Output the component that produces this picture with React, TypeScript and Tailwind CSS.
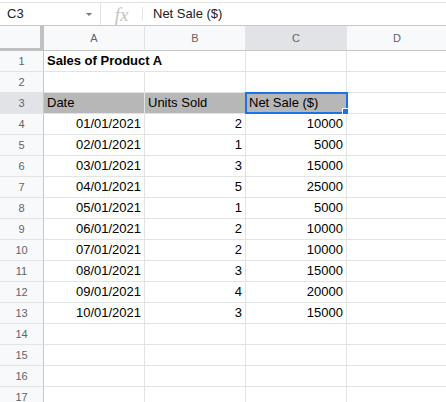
const font = "font-['Liberation_Sans',Arial,sans-serif]";

const rows: { a?: string; b?: string; c?: string; kind?: "title" | "head" }[] = [
  { a: "Sales of Product A", kind: "title" },
  {},
  { a: "Date", b: "Units Sold", c: "Net Sale ($)", kind: "head" },
];

const units = [2, 1, 3, 5, 1, 2, 2, 3, 4, 3];
units.forEach((u, i) => {
  rows.push({
    a: `${String(i + 1).padStart(2, "0")}/01/2021`,
    b: String(u),
    c: String(u * 5000),
  });
});
while (rows.length < 17) rows.push({});

function FormulaBar() {
  return (
    <div className="h-[26px] pt-[2px] bg-white">
      <div className="flex h-[24px] border-t border-b border-t-[#e3e3e3] border-b-[#c7c7c7] text-[13px] text-[#202124]">
        <div className="w-[101px] flex items-center justify-between pl-[7px] pr-[8px] border-r border-[#e3e3e3]">
          <span>C3</span>
          <span className="w-0 h-0 border-l-[3px] border-r-[3px] border-t-[3px] border-l-transparent border-r-transparent border-t-[#777]" />
        </div>
        <div className="w-[41px] flex items-center justify-center">
          <span className="font-['Liberation_Serif',serif] italic text-[19px] text-[#c4c4c4] leading-none">fx</span>
        </div>
        <div className="my-[4px] border-l border-[#e3e3e3]" />
        <div className="flex items-center pl-[10px]">Net Sale ($)</div>
      </div>
    </div>
  );
}

function App() {
  const cols = ["A", "B", "C", "D"];
  return (
    <div className={`${font} w-[446px] h-[402px] overflow-hidden bg-white`}>
      <FormulaBar />
      <div className="grid grid-cols-[44px_101px_101px_101px_101px] grid-rows-[25px] auto-rows-[21px]">
        {/* header row */}
        <div className="bg-[#f8f9fa] border-r-4 border-b-[3px] border-[#c0c0c0]" />
        {cols.map((c) => (
          <div
            key={c}
            className={`flex items-center justify-center text-[11px] text-[#5f6368] border-r border-r-[#e2e3e3] border-b border-b-[#c4c7c5] ${
              c === "C" ? "bg-[#e1e3e6]" : "bg-[#f8f9fa]"
            }`}
          >
            {c}
          </div>
        ))}

        {rows.map((r, i) => {
          const n = i + 1;
          const head = r.kind === "head";
          const title = r.kind === "title";
          const cell = `flex items-center px-[3px] text-[13px] text-black border-r border-b border-[#e2e3e3] whitespace-nowrap ${
            head ? "bg-[#b7b7b7]" : "bg-white"
          }`;
          return (
            <div key={n} className="contents">
              <div
                className={`flex items-center justify-center text-[11px] text-[#5f6368] border-r border-r-[#c4c7c5] border-b border-b-[#e2e3e3] ${
                  head ? "bg-[#e1e3e6]" : "bg-[#f8f9fa]"
                }`}
              >
                {n}
              </div>
              <div
                className={`${cell} ${head || title ? "" : "justify-end"} ${
                  title ? "relative z-10 font-bold border-r-white" : ""
                }`}
              >
                {r.a}
              </div>
              <div className={`${cell} ${head ? "" : "justify-end"}`}>{r.b}</div>
              <div className={`${cell} relative ${head ? "" : "justify-end"}`}>
                {r.c}
                {head && (
                  <>
                    <div className="absolute -left-px -top-px -right-[2px] -bottom-px border-2 border-[#1a73e8]" />
                    <div className="absolute -right-[3px] -bottom-[2px] w-[7px] h-[7px] bg-[#1a73e8] border border-white" />
                  </>
                )}
              </div>
              <div className={`${cell} bg-white`} />
            </div>
          );
        })}
      </div>
    </div>
  );
}

export default App;
